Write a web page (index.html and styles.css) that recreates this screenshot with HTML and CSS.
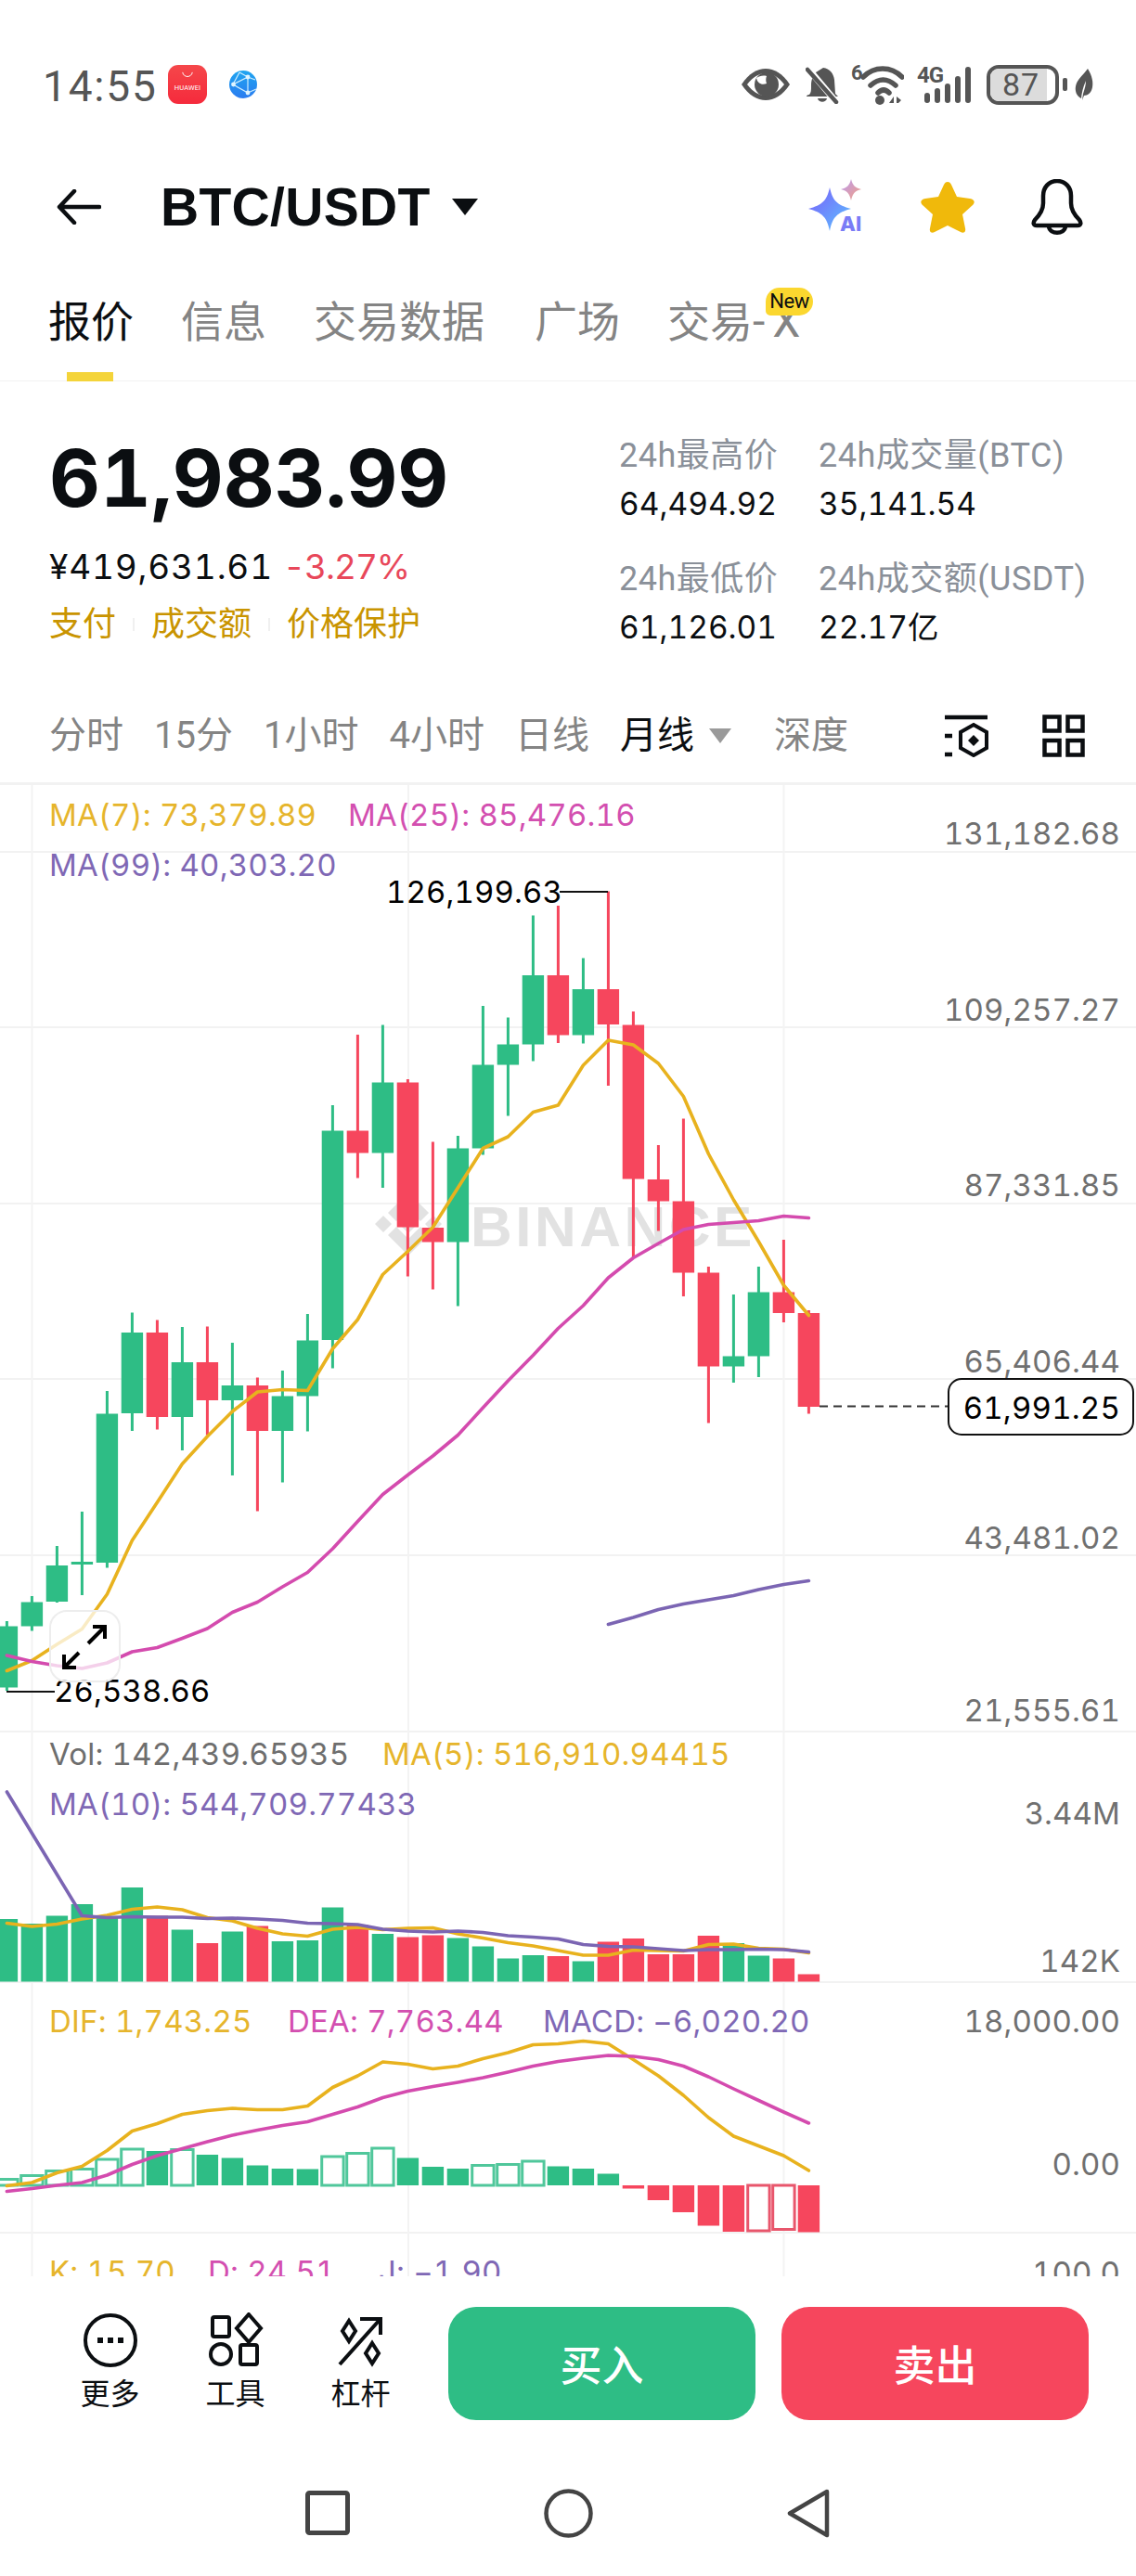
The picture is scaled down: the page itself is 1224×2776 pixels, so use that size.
FILE: index.html
```html
<!DOCTYPE html>
<html lang="zh-CN">
<head>
<meta charset="utf-8">
<title>BTC/USDT</title>
<link rel="stylesheet" href="styles.css">
</head>
<body>
<div class="app">
  <div class="status">
    <div class="status-left">
      <span class="clock">14:55</span>
      <span class="hw-icon">
        <svg class="hw-bag" viewBox="0 0 16 8"><path d="M2 1c1 7 11 7 12 0" fill="none" stroke="#fff" stroke-width="1.1"/></svg>
        <span class="hw-text">HUAWEI</span>
      </span>
      <svg class="globe" viewBox="0 0 30 30">
        <defs><linearGradient id="gb" x1="0" y1="0" x2="0" y2="1"><stop offset="0" stop-color="#1FA5F0"/><stop offset="1" stop-color="#2B7CF0"/></linearGradient></defs>
        <circle cx="15" cy="15" r="15" fill="url(#gb)"/>
        <path d="M20 7L4 15L20 24ZM20 7L11 2M4 15L11 2M20 7L28 10M20 24L29 20" fill="none" stroke="#cfeeff" stroke-width="1.2"/>
        <circle cx="20" cy="7" r="2.4" fill="#dff4ff"/><circle cx="4.5" cy="15" r="2.4" fill="#dff4ff"/><circle cx="20" cy="24" r="2.4" fill="#dff4ff"/>
      </svg>
    </div>
    <div class="status-right">
      <svg class="ic-eye" viewBox="0 0 54 36">
        <path d="M1 18C9 6 18 1 27 1s18 5 26 17c-8 12-17 17-26 17S9 30 1 18z" fill="#555"/>
        <path d="M7 18C13 10 20 6 27 6s14 4 20 12c-6 8-13 12-20 12S13 26 7 18z" fill="#fff"/>
        <circle cx="28" cy="18" r="13" fill="#555"/>
        <path d="M17 11c1 6 6 8 11 6-1-3-1-5 0-8-4-1-8 0-11 2z" fill="#fff"/>
      </svg>
      <svg class="ic-mute" viewBox="0 0 36 41">
        <path d="M19 2c7 1 11 6 12 13l1 15 3 3H1c0-1 1-2 3-2 2-2 2-5 2-10 0-6 2-11 5-14z" fill="#555"/>
        <path d="M13 35h10c-1 5-9 5-10 0z" fill="#555"/>
        <path d="M2 2l32 38" stroke="#fff" stroke-width="7"/>
        <path d="M2 4l31 35" stroke="#555" stroke-width="4.5" stroke-linecap="round"/>
      </svg>
      <span class="wifi">
        <span class="wifi-six">6</span>
        <svg class="ic-wifi" viewBox="0 0 46 42">
          <path d="M2 12C14 0 32 0 44 12M10 21c9-8 18-8 27 0M18 29c4-4 8-4 12 0" fill="none" stroke="#555" stroke-width="5.5" stroke-linecap="round"/>
          <circle cx="20" cy="37" r="5" fill="#555"/>
          <path d="M30 40l5-7v7zM38 33l5 4-3 3h-2z" fill="#555"/>
        </svg>
      </span>
      <span class="signal">
        <span class="sig-g">4G</span>
        <svg class="ic-signal" viewBox="0 0 60 40">
          <rect x="9" y="29" width="6" height="11" rx="3" fill="#555"/>
          <rect x="20" y="24" width="6" height="16" rx="3" fill="#555"/>
          <rect x="31" y="19" width="6" height="21" rx="3" fill="#555"/>
          <rect x="42" y="11" width="6" height="29" rx="3" fill="#555"/>
          <rect x="53" y="1" width="6" height="39" rx="3" fill="#555"/>
        </svg>
      </span>
      <span class="battery"><span class="battery-fill"></span><span class="battery-num">87</span></span>
      <span class="battery-tip"></span>
      <svg class="ic-leaf" viewBox="0 0 20 34"><path d="M14 0c5 8 6 15 5 20-1 6-5 9-9 9l-2 5 1-7c2-6 3-10 3-14-2 5-4 10-5 19C2 30 0 24 1 19 2 12 9 7 14 0z" fill="#555"/></svg>
    </div>
  </div>

  <header class="top">
    <svg class="ic-back" viewBox="0 0 48 38"><path d="M46 19H3M19 2L3 19l16 17" fill="none" stroke="#0b0e11" stroke-width="4.5" stroke-linecap="round" stroke-linejoin="round"/></svg>
    <h1 class="pair">BTC/USDT</h1>
    <svg class="ic-caret" viewBox="0 0 30 18"><path d="M1 0h28L15 18z" fill="#0b0e11"/></svg>
    <div class="top-actions">
      <span class="ai">
        <svg class="ic-ai" viewBox="0 0 64 60">
          <defs>
            <linearGradient id="s1" x1="0" y1="0" x2="1" y2="1"><stop offset="0" stop-color="#7A5CFA"/><stop offset="1" stop-color="#5CC4FF"/></linearGradient>
            <linearGradient id="s2" x1="0" y1="0" x2="1" y2="1"><stop offset="0" stop-color="#B99BF5"/><stop offset="1" stop-color="#F4A07E"/></linearGradient>
          </defs>
          <path d="M23 9c3 14 8 19 23 23-15 4-20 9-23 24-3-15-8-20-23-24 15-4 20-9 23-23z" fill="url(#s1)"/>
          <path d="M46 0c2 7 4 9 11 11-7 2-9 4-11 12-2-8-4-10-11-12 7-2 9-4 11-11z" fill="url(#s2)"/>
        </svg>
        <span class="ai-text">AI</span>
      </span>
      <svg class="ic-star" viewBox="0 0 58 56"><path d="M29 1c2 0 3 1 4 3l6 13 14 2c5 1 6 4 3 7L45 36l3 15c1 4-2 6-5 4L29 48l-14 7c-3 2-6 0-5-4l3-15L2 26c-3-3-2-6 3-7l14-2 6-13c1-2 2-3 4-3z" fill="#F0B90B"/></svg>
      <svg class="ic-bell" viewBox="0 0 56 60"><path d="M28 2c-9 0-15 7-15 16v8c0 8-4 13-9 18-2 3-2 6 2 6h44c4 0 4-3 2-6-5-5-9-10-9-18v-8c0-9-6-16-15-16zM19 51c1 9 17 9 18 0" fill="none" stroke="#0b0e11" stroke-width="4.5"/></svg>
    </div>
  </header>

  <nav class="tabs">
    <span class="tab tab-on">报价</span>
    <span class="tab">信息</span>
    <span class="tab">交易数据</span>
    <span class="tab tab-sq">广场</span>
    <span class="tab tab-x">交易<span class="tab-dash">-X</span><span class="new">New</span></span>
  </nav>

  <section class="quote">
    <div class="quote-main">
      <div class="price">61,983.99</div>
      <div class="sub"><span class="cny">¥419,631.61</span><span class="chg">-3.27%</span></div>
      <div class="links"><span>支付</span><i class="sep"></i><span>成交额</span><i class="sep"></i><span>价格保护</span></div>
    </div>
    <div class="stats">
      <div class="stat"><span class="stat-k">24h最高价</span><span class="stat-v">64,494.92</span></div>
      <div class="stat"><span class="stat-k">24h成交量(BTC)</span><span class="stat-v">35,141.54</span></div>
      <div class="stat"><span class="stat-k">24h最低价</span><span class="stat-v">61,126.01</span></div>
      <div class="stat"><span class="stat-k">24h成交额(USDT)</span><span class="stat-v">22.17亿</span></div>
    </div>
  </section>

  <div class="intervals">
    <span>分时</span><span>15分</span><span>1小时</span><span>4小时</span><span>日线</span>
    <span class="iv-on">月线<svg class="iv-caret" viewBox="0 0 24 16"><path d="M0 0h24L12 16z" fill="#9a9a9a"/></svg></span>
    <span class="iv-depth">深度</span>
    <div class="iv-icons">
      <svg class="ic-set" viewBox="0 0 48 46"><path d="M1 3h46M1 23h8M1 43h8" stroke="#0b0e11" stroke-width="4.5" fill="none"/><path d="M32 11l14 8v17l-14 8-14-8V19z" fill="none" stroke="#0b0e11" stroke-width="4"/><path d="M32 22l6 6-6 6-6-6z" fill="#0b0e11"/></svg>
      <svg class="ic-grid" viewBox="0 0 46 46"><g fill="none" stroke="#0b0e11" stroke-width="4.5"><rect x="2.500" y="2.500" width="16" height="15"/><rect x="27.500" y="2.500" width="16" height="15"/><rect x="2.500" y="28" width="16" height="15.500"/><rect x="27.500" y="28" width="16" height="15.500"/></g></svg>
    </div>
  </div>

  <svg id="chart" class="chart" viewBox="0 846 1224 1607" width="1224" height="1607">
    <g id="grid"></g>
    <g class="wm">
      <path d="M440 1285l22 22-9 9-13-13-13 13-9-9zM440 1353l22-22-9-9-13 13-13-13-9 9zM440 1309l10 10-10 10-10-10zM413 1310l9 9-9 9-9-9zM467 1310l9 9-9 9-9-9z"/>
      <text x="507" y="1343" class="wm-text">BINANCE</text>
    </g>
    <g id="plot"></g>

    <text x="53" y="890" class="lg c-y">MA(7): 73,379.89</text>
    <text x="375" y="890" class="lg c-p">MA(25): 85,476.16</text>
    <text x="53" y="944" class="lg c-v">MA(99): 40,303.20</text>
    <text x="53" y="1902" class="lg c-g">Vol: 142,439.65935</text>
    <text x="412" y="1902" class="lg c-y">MA(5): 516,910.94415</text>
    <text x="53" y="1956" class="lg c-v">MA(10): 544,709.77433</text>
    <text x="53" y="2190" class="lg c-y">DIF: 1,743.25</text>
    <text x="310" y="2190" class="lg c-p">DEA: 7,763.44</text>
    <text x="585" y="2190" class="lg c-v">MACD: −6,020.20</text>
    <text x="53" y="2460" class="lg c-y">K: 15.70</text>
    <text x="224" y="2460" class="lg c-p">D: 24.51</text>
    <text x="408" y="2460" class="lg c-v">J: −1.90</text>

    <text x="1207" y="910" class="ax">131,182.68</text>
    <text x="1207" y="1100" class="ax">109,257.27</text>
    <text x="1207" y="1289" class="ax">87,331.85</text>
    <text x="1207" y="1479" class="ax">65,406.44</text>
    <text x="1207" y="1669" class="ax">43,481.02</text>
    <text x="1207" y="1855" class="ax">21,555.61</text>
    <text x="1207" y="1966" class="ax">3.44M</text>
    <text x="1207" y="2125" class="ax">142K</text>
    <text x="1207" y="2190" class="ax">18,000.00</text>
    <text x="1207" y="2344" class="ax">0.00</text>
    <text x="1207" y="2461" class="ax">100.0</text>

    <text x="416" y="973" class="mark">126,199.63</text>
    <path d="M603 961H655" class="mark-line"/>
    <text x="58" y="1834" class="mark">26,538.66</text>
    <path d="M7 1823H59" class="mark-line"/>

    <path d="M883 1515.500H1022" class="dash"/>
    <rect x="1022" y="1486" width="199" height="60" rx="14" class="last-box"/>
    <text x="1207" y="1529" class="last">61,991.25</text>

    <rect x="54" y="1736" width="75" height="76" rx="18" class="exp-box"/>
    <path d="M95 1771L113 1753M100 1753H113V1766M85 1781L69 1797M69 1783V1797H82" class="exp-arrow"/>
  </svg>

  <div class="actions">
    <div class="tool">
      <svg class="tool-ic" viewBox="0 0 64 60"><circle cx="32" cy="30" r="27" fill="none" stroke="#0b0e11" stroke-width="4"/><path d="M18 27h6v6h-6zM29 27h6v6h-6zM40 27h6v6h-6z" fill="#0b0e11"/></svg>
      <span>更多</span>
    </div>
    <div class="tool">
      <svg class="tool-ic" viewBox="0 0 64 60"><g fill="none" stroke="#0b0e11" stroke-width="4"><rect x="7" y="5" width="18" height="21" rx="2"/><path d="M46 2l13 15-13 15-13-15z"/><circle cx="16" cy="45" r="11"/><rect x="37" y="35" width="18" height="21" rx="2"/></g></svg>
      <span>工具</span>
    </div>
    <div class="tool">
      <svg class="tool-ic" viewBox="0 0 64 60"><g fill="none" stroke="#0b0e11" stroke-width="4"><path d="M9 56L52 8M31 7H53V24"/><path d="M19 9l7 11-7 11-7-11z"/><path d="M44 33l7 11-7 11-7-11z"/></g></svg>
      <span>杠杆</span>
    </div>
    <button class="trade buy" type="button">买入</button>
    <button class="trade sell" type="button">卖出</button>
  </div>

  <div class="navbar">
    <svg class="nav-sq" viewBox="0 0 48 48"><rect x="2.500" y="2.500" width="43" height="43" rx="2" fill="none" stroke="#444" stroke-width="5"/></svg>
    <svg class="nav-ci" viewBox="0 0 53 53"><circle cx="26.500" cy="26.500" r="24" fill="none" stroke="#444" stroke-width="4.500"/></svg>
    <svg class="nav-tr" viewBox="0 0 46 53"><path d="M43 3L3 26.500 43 50z" fill="none" stroke="#444" stroke-width="4.500" stroke-linejoin="round"/></svg>
  </div>
</div>
<script src="chart.js"></script>
</body>
</html>
```
FILE: styles.css
```css
* { box-sizing: border-box; }
html, body { margin: 0; padding: 0; background: #fff; }
body { font-family: "Roboto", "Noto Sans CJK SC", sans-serif; color: #0b0e11; }
.app { width: 1224px; height: 2776px; overflow: hidden; background: #fff; }

/* status bar */
.status { height: 182px; display: flex; justify-content: space-between; align-items: center; padding: 0 46px 0 46px; color: #555; }
.status-left { display: flex; align-items: center; }
.clock { font-size: 46px; letter-spacing: 1.8px; line-height: 46px; margin-top: 4px; width: 135px; }
.hw-icon { width: 42px; height: 42px; border-radius: 11px; background: linear-gradient(#f5474a, #f52a3c); display: flex; flex-direction: column; align-items: center; padding-top: 7px; }
.hw-bag { width: 14px; height: 7px; display: block; }
.hw-text { font-size: 7.500px; line-height: 11px; color: #fff; margin-top: 5px; letter-spacing: .1px; }
.globe { width: 30px; height: 30px; margin-left: 24px; }
.status-right { display: flex; align-items: center; }
.ic-eye { width: 54px; height: 36px; }
.ic-mute { width: 36px; height: 41px; margin-left: 16px; }
.wifi { position: relative; width: 57px; height: 42px; margin-left: 13px; display: block; }
.wifi-six { position: absolute; left: 0; top: -3px; font-size: 22px; font-weight: 700; line-height: 24px; color: #555; }
.ic-wifi { position: absolute; right: 0; top: 1px; width: 46px; height: 42px; }
.signal { position: relative; width: 59px; height: 40px; margin-left: 14px; display: block; }
.sig-g { position: absolute; left: 0; top: -3px; font-size: 24px; font-weight: 700; line-height: 26px; letter-spacing: -1px; color: #555; }
.ic-signal { position: absolute; right: 0; top: 0; width: 60px; height: 40px; }
.battery { position: relative; width: 78px; height: 43px; margin-left: 16px; border: 4px solid #555; border-radius: 13px; overflow: hidden; display: block; }
.battery-fill { position: absolute; left: 0; top: 0; bottom: 0; width: 87%; background: #dcdcdc; }
.battery-num { position: absolute; left: 0; right: 4px; top: 0; text-align: center; font-size: 34px; line-height: 35px; color: #555; letter-spacing: 1px; }
.battery-tip { width: 5px; height: 14px; background: #555; border-radius: 2px; margin-left: 4px; }
.ic-leaf { width: 20px; height: 34px; margin-left: 8px; }

/* header */
.top { height: 82px; display: flex; align-items: center; padding: 0 57px 0 61px; }
.ic-back { width: 48px; height: 38px; }
.pair { margin: 0 0 0 64px; font: 700 57px/82px "Liberation Sans", sans-serif; letter-spacing: .3px; }
.ic-caret { width: 30px; height: 18px; margin-left: 22px; }
.top-actions { margin-left: auto; display: flex; align-items: center; }
.ai { position: relative; width: 64px; height: 60px; display: block; }
.ic-ai { width: 64px; height: 60px; display: block; }
.ai-text { position: absolute; left: 34px; top: 36px; font: 800 22px/24px "Inter", sans-serif; color: #7a7cf6; }
.ic-star { width: 58px; height: 56px; margin-left: 57px; }
.ic-bell { width: 56px; height: 60px; margin-left: 61px; }

/* tabs */
.tabs { height: 147px; padding: 51px 0 0 52px; display: flex; gap: 51px; border-bottom: 1px solid #f2f2f2; }
.tab { position: relative; font-size: 46px; line-height: 64px; color: #848484; height: 64px; white-space: nowrap; }
.tab-on { color: #0b0e11; }
.tab-on::after { content: ""; position: absolute; left: 20px; top: 86px; width: 50px; height: 10px; background: #f4d43a; }
.tab-sq { margin-left: 3px; }
.tab-dash { letter-spacing: 8px; font-size: 48px; }
.new { position: absolute; left: 106px; top: -5px; width: 51px; height: 30px; border-radius: 15px 15px 15px 5px; background: #fbd72f; color: #0b0e11; font-size: 22px; line-height: 30px; text-align: center; letter-spacing: -.5px; }

/* quote */
.quote { height: 329px; display: flex; padding: 0 0 0 53px; }
.quote-main { width: 614px; padding-top: 70px; }
.price { font: 700 85px/70px "Inter", sans-serif; font-variant-numeric: tabular-nums; }
.sub { margin-top: 38px; display: flex; gap: 11px; font: 400 37px/44px "Inter", sans-serif; font-variant-numeric: tabular-nums; }
.cny { letter-spacing: .8px; }
.chg { color: #e8475a; letter-spacing: -1px; }
.links { margin-top: 18px; display: flex; align-items: center; gap: 18px; font-size: 36px; line-height: 44px; color: #c99400; }
.sep { width: 2px; height: 14px; background: #f0f0f0; }
.stats { padding-top: 58px; display: grid; grid-template-columns: 215px auto; row-gap: 37px; align-content: start; }
.stat { display: flex; flex-direction: column; gap: 8px; }
.stat-k { font-size: 36px; line-height: 44px; color: #8a9099; white-space: nowrap; letter-spacing: .5px; }
.stat-v { font: 400 33.500px/44px "Inter", "Noto Sans CJK SC", sans-serif; font-variant-numeric: tabular-nums; white-space: nowrap; }

/* intervals */
.intervals { height: 106px; display: flex; align-items: center; gap: 33px; padding: 3px 55px 0 53px; font-size: 40px; line-height: 50px; color: #848484; border-bottom: 3px solid #f2f2f2; }
.iv-on { color: #0b0e11; display: flex; align-items: center; gap: 16px; }
.iv-caret { width: 24px; height: 16px; }
.iv-depth { margin-left: 13px; }
.iv-icons { margin-left: auto; display: flex; align-items: center; gap: 58px; }
.ic-set { width: 48px; height: 46px; }
.ic-grid { width: 46px; height: 46px; }

/* chart */
.chart { display: block; }
.wm path { fill: #e2e2e2; }
.wm-text { font: 700 62px "Liberation Sans", sans-serif; letter-spacing: 3.500px; fill: #e2e2e2; }
.lg, .ax, .mark, .last { font: 400 33px "Inter", sans-serif; font-variant-numeric: tabular-nums; letter-spacing: .2px; }
.ax, .mark { letter-spacing: .1px; }
.c-y { fill: #e6b52c; }
.c-p { fill: #d34fb0; }
.c-v { fill: #7f68b5; }
.c-g { fill: #6e6e6e; }
.ax { fill: #707070; text-anchor: end; }
.mark { fill: #000; }
.mark-line { stroke: #111; stroke-width: 2; fill: none; }
.dash { stroke: #333; stroke-width: 2; stroke-dasharray: 9 6; fill: none; }
.last-box { fill: #fff; stroke: #111; stroke-width: 2; }
.last { fill: #000; text-anchor: end; }
.exp-box { fill: #fff; fill-opacity: .74; stroke: #ededed; stroke-width: 2; }
.exp-arrow { fill: none; stroke: #000; stroke-width: 4; }
.g-line { stroke: #f2f2f2; stroke-width: 2; }
.v-line { stroke: #f3f3f3; stroke-width: 2; }

/* bottom */
.actions { height: 187px; display: flex; align-items: flex-start; padding: 33px 0 0 51px; }
.tool { width: 135px; display: flex; flex-direction: column; align-items: center; font-size: 32px; line-height: 40px; padding-top: 6px; }
.tool-ic { width: 64px; height: 60px; display: block; margin-bottom: 8px; }
.trade { width: 331px; height: 122px; border: 0; border-radius: 30px; color: #fff; font: 500 45px/122px "Noto Sans CJK SC", sans-serif; padding: 0; }
.buy { background: #2ebd85; margin-left: 27px; }
.sell { background: #f6465d; margin-left: 28px; }
.navbar { height: 136px; display: flex; align-items: center; justify-content: center; gap: 209px; padding-right: 2px; }
.nav-sq { width: 48px; height: 48px; }
.nav-ci { width: 53px; height: 53px; }
.nav-tr { width: 46px; height: 53px; }
```
FILE: chart.js
```js
(function () {
  var NS = 'http://www.w3.org/2000/svg';
  var GREEN = '#2ebd85', RED = '#f6465d';
  var YEL = '#e8b21e', PINK = '#d44bae', PUR = '#7b65b3';
  var grid = document.getElementById('grid');
  var plot = document.getElementById('plot');
  function X(i) { return 7.4 + 27 * i; }
  function el(parent, name, attrs) {
    var n = document.createElementNS(NS, name);
    for (var k in attrs) n.setAttribute(k, attrs[k]);
    parent.appendChild(n);
    return n;
  }
  function rect(x, y, w, h, fill) { return el(plot, 'rect', { x: x, y: y, width: w, height: h, fill: fill }); }

  [918, 1107, 1297, 1486, 1676, 1866, 2136, 2406].forEach(function (y) {
    el(grid, 'line', { x1: 0, x2: 1224, y1: y, y2: y, 'class': 'g-line' });
  });
  [34.5, 440, 844.5].forEach(function (x) {
    el(grid, 'line', { x1: x, x2: x, y1: 846, y2: 2453, 'class': 'v-line' });
  });

  // wick top, body top, body bottom, wick bottom, colour
  var candles = [
    [1747, 1752.5, 1818.5, 1822, 'g'], [1720, 1726.5, 1752.5, 1757.5, 'g'], [1666, 1687, 1726, 1727, 'g'],
    [1629, 1683, 1686, 1719, 'g'], [1499, 1523.5, 1684, 1689.5, 'g'], [1414.5, 1436, 1523, 1542, 'g'],
    [1422.5, 1436, 1527, 1540.5, 'r'], [1430, 1468, 1527, 1563, 'g'], [1429.5, 1468, 1509, 1546.5, 'r'],
    [1447, 1493, 1509, 1590, 'g'], [1484.5, 1493, 1542, 1628.5, 'r'], [1477, 1504.5, 1542, 1597.5, 'g'],
    [1416, 1444.5, 1504.5, 1542.5, 'g'], [1191, 1218.5, 1444, 1474.5, 'g'], [1115, 1218.5, 1242.5, 1269.5, 'r'],
    [1104.5, 1166.5, 1242.5, 1280, 'g'], [1163, 1166.5, 1322.5, 1375.5, 'r'], [1230.5, 1323, 1338.5, 1389.5, 'r'],
    [1224, 1237.5, 1338.5, 1407.5, 'g'], [1084, 1147.5, 1237.5, 1244.5, 'g'], [1096.5, 1125.5, 1147.5, 1202.5, 'g'],
    [986.5, 1051, 1125.5, 1143.5, 'g'], [976, 1051, 1115.5, 1124, 'r'], [1032.5, 1066, 1115.5, 1124.5, 'g'],
    [960.5, 1066, 1104, 1170, 'r'], [1090, 1104.5, 1270.5, 1355.5, 'r'], [1234, 1271, 1294.5, 1326.5, 'r'],
    [1205.5, 1294.5, 1371.5, 1397, 'r'], [1365, 1371.5, 1472.5, 1533.5, 'r'], [1395, 1461.5, 1472.5, 1490, 'g'],
    [1365, 1392.5, 1461.5, 1484, 'g'], [1336, 1392.5, 1415, 1425, 'r'], [1412, 1415, 1516, 1523.5, 'r']
  ];
  candles.forEach(function (c, i) {
    var col = c[4] === 'g' ? GREEN : RED, x = X(i);
    rect(x - 1.5, c[0], 3, c[3] - c[0], col);
    rect(x - 11.7, c[1], 23.4, c[2] - c[1], col);
  });

  var volTop = [2068, 2073, 2064.5, 2052, 2067, 2034, 2064.5, 2079.5, 2094, 2081.5, 2075.5, 2092, 2091, 2055.5, 2074.5, 2084, 2087.5, 2085.5, 2088.5, 2097.5, 2110.5, 2107, 2108, 2113.5, 2092.5, 2089, 2106, 2106, 2086, 2094, 2107.5, 2110.5, 2127.5];
  var volRed = { 6: 1, 8: 1, 10: 1, 14: 1, 16: 1, 17: 1, 22: 1, 24: 1, 25: 1, 26: 1, 27: 1, 28: 1, 31: 1, 32: 1 };
  volTop.forEach(function (t, i) {
    rect(X(i) - 11.7, t, 23.4, 2135.5 - t, volRed[i] ? RED : GREEN);
  });

  var base = 2355;
  // value, hollow
  var macd = [[2348.5, 1], [2344.5, 1], [2339.5, 1], [2337.5, 1], [2327, 1], [2316, 1], [2318, 0], [2316.5, 1], [2322, 0], [2325.5, 0], [2333.5, 0], [2337, 0], [2337.5, 0], [2324, 1], [2320.5, 1], [2315, 1], [2325.5, 0], [2335, 0], [2337, 0], [2333.5, 1], [2332.5, 1], [2329, 1], [2334.5, 0], [2337, 0], [2342.5, 0], [2358.5, 0], [2371, 0], [2384, 0], [2398.5, 0], [2405, 0], [2404, 1], [2402.5, 1], [2405.5, 0]];
  macd.forEach(function (m, i) {
    var up = m[0] < base, top = Math.min(m[0], base), h = Math.abs(m[0] - base);
    var col = up ? GREEN : RED, x = X(i);
    if (m[1]) {
      el(plot, 'rect', { x: x - 11.7, y: top, width: 23.4, height: h, fill: '#fff', stroke: up ? '#50c79b' : '#e8566c', 'stroke-width': 3 });
    } else {
      rect(x - 11.7, top, 23.4, h, col);
    }
  });

  function line(ys, col, start) {
    var pts = ys.map(function (y, i) { return X(i + (start || 0)).toFixed(1) + ',' + y; }).join(' ');
    el(plot, 'polyline', { points: pts, fill: 'none', stroke: col, 'stroke-width': 3.6, 'stroke-linejoin': 'round', 'stroke-linecap': 'round' });
  }
  line([1800.5, 1789.5, 1772, 1755.5, 1718, 1660, 1619, 1577.5, 1548, 1521, 1500, 1497.5, 1498.5, 1453.5, 1422, 1373.5, 1348.5, 1322.5, 1280, 1237.5, 1225, 1198.5, 1191, 1148, 1121, 1126, 1146, 1181.5, 1243.5, 1293, 1338, 1385, 1417.5], YEL);
  line([1784, 1790.5, 1795, 1798, 1792, 1780, 1775.5, 1765.5, 1755, 1737.5, 1726.5, 1710, 1694.5, 1669, 1639.5, 1610.5, 1589.5, 1569, 1546.5, 1517, 1488, 1460.5, 1431.5, 1407, 1377, 1355.5, 1340, 1325, 1319.5, 1317.5, 1315.5, 1310.5, 1312.5], PINK);
  line([1750.5, 1743, 1734.5, 1728.5, 1724, 1719.5, 1713, 1707.5, 1703.5], PUR, 24);

  line([2072.5, 2076, 2073.5, 2068, 2064, 2057.5, 2055, 2058, 2066.5, 2070, 2078, 2084, 2086.5, 2079, 2077, 2079.5, 2078, 2077.5, 2084, 2088.5, 2093.5, 2097, 2102, 2107, 2107, 2101.5, 2102, 2102.5, 2095.5, 2095, 2099.5, 2100.5, 2104.5], YEL);
  line([1931, 1975.5, 2020, 2064.5, 2066.5, 2065.5, 2066, 2066, 2067.5, 2067, 2068, 2069.5, 2072.5, 2073, 2074, 2079, 2081, 2082, 2081, 2082.5, 2086, 2087.5, 2089.5, 2095.5, 2097.5, 2098, 2100, 2102, 2101, 2101, 2100.5, 2101, 2103.5], PUR);

  line([2355.5, 2352, 2341.5, 2334.5, 2317.5, 2296.5, 2288.5, 2278.5, 2274.5, 2272, 2273.5, 2273.5, 2269.5, 2249.5, 2237, 2222, 2224.5, 2229.5, 2226.5, 2218.5, 2212, 2203.5, 2202.5, 2199.5, 2202.5, 2219.5, 2237, 2258, 2282, 2302, 2312.5, 2323, 2339], YEL);
  line([2361.5, 2358.5, 2355, 2352, 2344, 2332.5, 2323, 2315.5, 2308, 2301, 2295.5, 2290.5, 2286.5, 2278.5, 2270.5, 2260.5, 2253.5, 2248.5, 2244, 2239, 2233, 2226.5, 2221.5, 2218, 2215, 2216, 2219.5, 2226.5, 2238, 2251, 2263.5, 2276, 2288], PINK);
})();
```
